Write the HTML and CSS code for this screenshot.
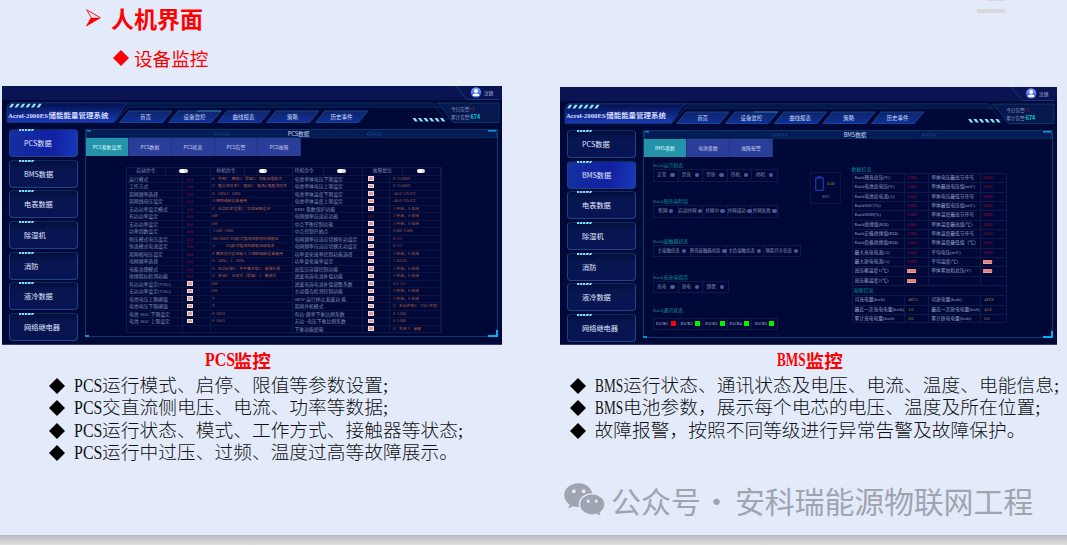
FILE: index.html
```html
<!DOCTYPE html>
<html lang="zh-CN">
<head>
<meta charset="utf-8">
<title>人机界面</title>
<link rel="stylesheet" href="styles.css">
</head>
<body>
<main class="slide">
  <header class="head">
    <div class="head-main">
      <h1><svg width="15" height="18" viewBox="0 0 15 18"><path d="M.7.8 14.3 8.7.7 16.8 5.3 8.7Z" fill="none" stroke="#f00" stroke-width=".9"/><path d="M5.3 8.7H14.3L.7 16.8Z" fill="#f00"/></svg><span>人机界面</span></h1>
      <h2><svg class="dia" viewBox="0 0 16 16"><path d="M8 0 16 8 8 16 0 8Z"/></svg><span>设备监控</span></h2>
    </div>
    <div class="deco"><i></i><i></i></div>
  </header>
  <div class="cols">
    <section class="col col-l">
      <div class="screen" id="pcs"></div>
      <h3><span class="lat"><b>PCS</b></span>监控</h3>
      <ul>
        <li><svg class="dia" viewBox="0 0 16 16"><path d="M8 0 16 8 8 16 0 8Z"/></svg><span class="lat"><b>PCS</b></span>运行模式、启停、限值等参数设置;</li>
        <li><svg class="dia" viewBox="0 0 16 16"><path d="M8 0 16 8 8 16 0 8Z"/></svg><span class="lat"><b>PCS</b></span>交直流侧电压、电流、功率等数据;</li>
        <li><svg class="dia" viewBox="0 0 16 16"><path d="M8 0 16 8 8 16 0 8Z"/></svg><span class="lat"><b>PCS</b></span>运行状态、模式、工作方式、接触器等状态;</li>
        <li><svg class="dia" viewBox="0 0 16 16"><path d="M8 0 16 8 8 16 0 8Z"/></svg><span class="lat"><b>PCS</b></span>运行中过压、过频、温度过高等故障展示。</li>
      </ul>
    </section>
    <section class="col col-r">
      <div class="screen" id="bms"></div>
      <h3><span class="lat lat-b"><b>BMS</b></span>监控</h3>
      <ul>
        <li><svg class="dia" viewBox="0 0 16 16"><path d="M8 0 16 8 8 16 0 8Z"/></svg><span class="lat lat-b"><b>BMS</b></span>运行状态、通讯状态及电压、电流、温度、电能信息;</li>
        <li><svg class="dia" viewBox="0 0 16 16"><path d="M8 0 16 8 8 16 0 8Z"/></svg><span class="lat lat-b"><b>BMS</b></span>电池参数，展示每个电芯的电压、温度及所在位置;</li>
        <li><svg class="dia" viewBox="0 0 16 16"><path d="M8 0 16 8 8 16 0 8Z"/></svg>故障报警，按照不同等级进行异常告警及故障保护。</li>
      </ul>
      <div class="mark">
        <svg width="41" height="34" viewBox="0 0 41 34"><path fill="#a0a4b1" fill-rule="evenodd" d="M14.5.3C6.500.3.2 5.600.2 12.300c0 3.800 2 7 5.300 9.200L4.300 25.500l4.600-2.300c2 .6 4 .9 6.200.8a10.500 10.500 0 0 1-.4-2.800c0-6.200 5.900-10.900 13.500-10.900C27 4.300 21.400.3 14.500.3ZM9.800 6.300a2 2 0 1 1 0 4 2 2 0 0 1 0-4Zm9.800 0a2 2 0 1 1 0 4 2 2 0 0 1 0-4Z"/><path fill="#a0a4b1" fill-rule="evenodd" d="M28.200 11.600c-6.800 0-12 4.400-12 9.800 0 5.500 5.200 9.900 12 9.900 1.600 0 3-.3 4.500-.7l3.900 2.200-1.100-3.500c2.900-1.900 4.800-4.700 4.800-7.900 0-5.400-5.400-9.800-12.100-9.800Zm-4 5a1.600 1.600 0 1 1 0 3.200 1.600 1.600 0 0 1 0-3.200Zm8 0a1.600 1.600 0 1 1 0 3.200 1.600 1.600 0 0 1 0-3.200Z"/></svg>
        <span class="mk1">公众号</span><span class="mkd">·</span><span class="mk2">安科瑞能源物联网工程</span>
      </div>
    </section>
  </div>
</main>
<script src="app.js"></script>
</body>
</html>
```

FILE: styles.css
```css
* { box-sizing: border-box; }
body {
  margin: 0; width: 1067px; height: 545px; overflow: hidden;
  background: linear-gradient(#b9babd 535px, #dedede 545px);
  font-family: "Liberation Serif", "Noto Sans CJK SC", serif;
}
.slide { height: 535px; background: #e3ebfb; overflow: hidden; }
h1, h2, h3, ul { margin: 0; padding: 0; font-weight: normal; }
.head { height: 86px; display: flex; justify-content: space-between; padding: 0 62px 0 86px; }
h1 { display: flex; align-items: center; gap: 10px; height: 36px; color: #f00; font: bold 23px/36px "Noto Sans CJK SC", sans-serif; }
h2 { display: flex; align-items: center; gap: 5px; margin: 8px 0 0 27px; height: 28px; color: #f00; font: 18.6px/28px "Noto Sans CJK SC", sans-serif; }
.dia { width: 16px; height: 16px; flex: none; fill: currentColor; }
.deco { display: flex; flex-direction: column; align-items: flex-end; gap: 8px; }
.deco i { width: 28px; height: 4px; background: #d9d9d9; }
.deco i:first-child { width: 18px; height: 1px; }
.cols { display: flex; gap: 58px; padding-left: 2px; }
.col { width: 500px; flex: none; }
.col-r { width: 507px; padding-top: 1px; }
.screen { width: 500px; height: 258.500px; background: #000838; overflow: hidden; border-bottom: 1px solid #30386c; font-family: "Noto Sans CJK SC", sans-serif; color: #c9d2f1; white-space: nowrap; }
.col-r .screen { width: 497px; height: 257.500px; }
h3 { height: 29px; padding-left: 203px; display: flex; color: #f00; font: bold 18.700px/30px "Noto Sans CJK SC", sans-serif; }
.col-r h3 { padding-left: 217px; }
.lat { width: 28.500px; flex: none; overflow: visible; font-family: "Liberation Serif", serif; }
.lat b { display: inline-block; font-weight: inherit; transform: scaleX(.85); transform-origin: 0 50%; }
.lat-b b { transform: scaleX(.71); }
ul { list-style: none; padding-left: 47px; padding-top: 1px; }
.col-r ul { padding-left: 10px; }
li { display: flex; align-items: center; height: 22.500px; color: #111; font: 300 18.700px/22.500px "Liberation Serif", "Noto Sans CJK SC", serif; white-space: nowrap; letter-spacing: .05px; }
li .dia { margin-right: 8.500px; fill: #000; }
.mark { display: flex; align-items: center; height: 36px; margin: 40px 0 0 4px; color: #a0a4b1; font: 30px/36px "Noto Sans CJK SC", sans-serif; }
.mk1 { margin-left: 6px; width: 92px; }
.mkd { width: 31px; text-align: center; margin-left: -2px; }
.mk2 { margin-left: 3px; letter-spacing: -.2px; }

/* console chrome */
.top { display: block; width: 100%; height: 43px; }
.top text { font-family: "Noto Sans CJK SC", sans-serif; }
.top .brand { font-family: "Liberation Serif", "Noto Sans CJK SC", serif; font-weight: bold; }
.body { display: flex; gap: 7px; padding: 0 4px 0 6px; }
.side { width: 70px; flex: none; display: flex; flex-direction: column; gap: 2.700px; }
.side div { height: 28px; width: 69px; margin-left: .5px; background: linear-gradient(#020e3d, #071650 30%, #081453); border: 1px solid #15488a; border-top-color: #0d2b63; border-bottom-width: 1.500px; border-radius: 4px; padding-left: 14.500px; font-size: 7.200px; line-height: 27px; position: relative; color: #e0e7ff; }
.side .on { background: linear-gradient(100deg, #1530a0, #1120a0 60%, #1838ba); }
.side div::before { content: ""; position: absolute; left: 9px; top: -1px; width: 15px; height: 2px; background: repeating-linear-gradient(115deg, #7fd8fa 0 2px, #1c5f95 2px 2.900px); }
.panel { flex: 1; height: 208px; border: 1px solid #073b70; border-top: 0; position: relative; }
.panel::before, .panel::after { content: ""; position: absolute; width: 8px; height: 5px; }
.panel::before { left: -1px; bottom: -1px; width: 4px; height: 2px; background: #0793dc; }
.panel::after { right: -1px; bottom: -1px; border-right: 2px solid #00b2f4; border-bottom: 2px solid #00b2f4; }
.ptitle { height: 9px; display: flex; align-items: center; justify-content: space-between; padding: 0 112px 0 126px; background: linear-gradient(90deg, #0a86c8 4px, transparent 4px) 0 0 / 100% 1.500px no-repeat, linear-gradient(270deg, #0a9be0 8px, transparent 8px) 0 0 / 100% 1.500px no-repeat, #041c55; border: 1px solid #07366d; border-bottom-color: #06295c; font-size: 5.600px; line-height: 8px; }
.ptitle svg { width: 18px; height: 4px; fill: none; stroke: #17598f; stroke-width: .7; }
.tabs { display: flex; height: 18px; }
.tabs span { width: 43px; background: #2a3d98; border-right: 1px solid #223287; text-align: center; font-size: 4.900px; line-height: 18px; }
.tabs .on { background: #2492a8; color: #d8ffff; }

/* parameter table */
.ptable { margin: 11px 0 0 40px; width: 315.500px; border: 1px solid #11184a; font: 4.850px/7px "Liberation Serif", "Noto Sans CJK SC", serif; color: #8590b5; }
.prow { display: grid; grid-template-columns: 55.500px 28.500px 81.500px 70.500px 26.500px 1fr; height: 7.500px; border-top: 1px solid #0c1444; }
.prow span { border-right: 1px solid #0f1646; padding-left: 2px; overflow: hidden; height: 7.500px; line-height: 7px; }
.prow .d { color: #b3644e; font-size: 3.900px; padding-left: 1px; }
.prow .d2 { padding-left: 3.500px; }
.prow .v { color: #a20d32; padding: 0 0 0 4.500px; font-size: 4.600px; }
.prow .v b { display: block; width: 6px; height: 4.500px; margin: .8px 0 0; background: #dc9a98; border: .5px solid #eedcdc; }
.phead { display: grid; grid-template-columns: 39px 45px 34px 47.500px 31.500px 39px 39.500px 1fr; height: 6.500px; line-height: 6px; }
.phead span { text-align: center; border-right: 1px solid #11184a; height: 6.500px; }
.phead span:nth-child(2) { padding-right: 9px; }
.phead span:nth-child(3) { padding-right: 3px; }
.phead span:nth-child(4) { padding-right: 11px; }
.phead span:nth-child(5) { padding-right: 7px; }
.phead span:nth-child(6) { padding-right: 3px; }
.phead b { display: block; width: 8.500px; height: 4px; margin: 1px auto 0; border-radius: 2px; background: linear-gradient(90deg, #fff 60%, #ddd 60%); }

/* battery screen */
.bms { display: flex; height: 181px; font: 4.900px/6px "Liberation Serif", "Noto Sans CJK SC", serif; color: #8590b5; }
.groups { width: 166px; padding: 6px 0 0 9px; }
.gt { color: #078f9f; line-height: 6px; height: 6px; font-size: 5px; }
.cells { display: flex; height: 12.500px; margin: 0 0 17.500px; width: max-content; border: 1px solid #11184a; }
.cells span { width: 24.600px; display: flex; align-items: center; justify-content: center; gap: 4px; border-right: 1px solid #11184a; font-size: 4.600px; }
.cells span:last-child { border: 0; }
.cells i { width: 4.300px; height: 4.300px; border-radius: 50%; background: #515a99; flex: none; }
.cells.wide { margin-bottom: 21px; }
.cells.wide span { gap: 1.500px; }
.cells.contact span { width: 36.500px; gap: 2px; font-size: 4.400px; }
.cells.rest { margin-bottom: 14.500px; }
.cells.pack { margin-top: 4px; margin-bottom: 0; }
.cells.pack span { font-size: 3.900px; gap: 2.500px; color: #c3cae6; }
.cells.pack i { border-radius: 0; background: #00f300; width: 5px; height: 5px; }
.cells.pack .bad { background: #f00; }
.soc { width: 30.500px; height: 32px; margin-top: 15px; border: 1px solid #0c1444; padding: 3px 4px; }
.soc div { display: flex; align-items: center; gap: 3px; color: #ad8a2a; font-size: 4.300px; }
.soc p { margin: 3px 0 0 7px; font-size: 4px; line-height: 5px; }
.info { margin: 10px 0 0 11px; width: 155px; }
.irow { display: grid; grid-template-columns: 52.700px 24px 52px 1fr; height: 9.330px; border: 1px solid #11184a; border-bottom: 0; }
.irow span { border-right: 1px solid #11184a; padding-left: 2px; line-height: 8.500px; font-size: 4.750px; color: #9da6c8; overflow: hidden; }
.irow span:last-child { border-right: 0; }
.irow .v { color: #a20d32; font-size: 4.100px; }
.irow .y { color: #b99139; font-size: 4.100px; padding-left: 3px; }
.irow em { font-style: normal; display: inline-block; line-height: 4px; background: #e6a09e; color: #d44; padding: 0; }
.sub { height: 10.500px; border: 1px solid #11184a; border-bottom: 0; line-height: 9.500px; padding-left: 1px; }
.last { border-bottom: 1px solid #11184a; }
```

FILE: app.js
```js
const NAV = ['首页', '设备监控', '曲线报表', '策略', '历史事件'];
const SIDE = ['PCS数据', 'BMS数据', '电表数据', '除湿机', '消防', '液冷数据', '网络继电器'];

function slashes(x, y, n, step, lean) {
  let s = '';
  for (let i = 0; i < n; i++) {
    const a = x + i * step;
    s += `<path d="M${a + (lean > 0 ? 2 : 0)} ${y}h2.800l${-lean} 3.600h-2.800z" fill="#8be6f6"/>`;
  }
  return s;
}

function topBar(id) {
  const tabs = NAV.map((t, i) => {
    const x = 118 + i * 49;
    return `<path d="M${x + 9} 25h43l-9.500 11.500h-43z" fill="url(#t${id})" stroke="#194f98" stroke-width=".8"/>` +
      (i === 1 ? `<path d="M${x + 28} 25h24" stroke="#2a93b8" stroke-width=".8"/>` : '') +
      `<text x="${x + 25.5}" y="33" font-size="5.500" text-anchor="middle" fill="#ccd7f7">${t}</text>`;
  }).join('');
  return `<svg class="top" viewBox="0 0 500 43" preserveAspectRatio="none">
  <defs>
    <linearGradient id="t${id}" x2="0" y2="1"><stop stop-color="#0d2568"/><stop offset="1" stop-color="#10309a"/></linearGradient>
    <linearGradient id="b${id}" x2="0" y2="1"><stop stop-color="#03104c"/><stop offset="1" stop-color="#1a3bb7"/></linearGradient>
    <linearGradient id="a${id}" x2="0" y2="1"><stop stop-color="#7fa6ff"/><stop offset="1" stop-color="#274fd1"/></linearGradient>
  </defs>
  <path d="M0 0H500V14H0Z" fill="#0b1453"/>
  <path d="M454 0 465 13.500H497" fill="none" stroke="#15447f" stroke-width=".8"/>
  <circle cx="474" cy="6.500" r="5.200" fill="url(#a${id})"/><circle cx="474" cy="5" r="1.900" fill="#fff"/><path d="M470.500 9.500q0-2 3.500-2t3.500 2l-1 .8h-5z" fill="#fff"/>
  <text x="482" y="8.600" font-size="4.600" fill="#bdc6e7">注销</text>
  <path d="M5 20 9 16.500H430L443 33H456" fill="none" stroke="#082458"/>
  <path d="M122 17H436V19.500H124Z" fill="#051b50"/>
  <path d="M5 20 9 17H125L112 36.500H5Z" fill="url(#b${id})" stroke="#123782" stroke-width=".7"/>
  <path d="M112 36.500 126 21H438" fill="none" stroke="#0b346b" stroke-width="1"/>
  <path d="M436 17H497V36.500H451Z" fill="#06194e" stroke="#0d3c75" stroke-width=".8"/>
  ${slashes(7.5, 17.800, 6, 5.500, 2.500)}${slashes(410.5, 32, 6, 5.500, -2.500)}
  <text class="brand" x="6" y="31.500" font-size="6.700" textLength="40" lengthAdjust="spacingAndGlyphs" fill="#d5dcff">Acrel-2000ES</text>
  <text class="brand" x="46.500" y="31.500" font-size="6.700" textLength="60" lengthAdjust="spacingAndGlyphs" fill="#d5dcff">储能能量管理系统</text>
  ${tabs}
  <text x="449" y="25" font-size="4.600" fill="#8e9aca">今日告警: <tspan fill="#d50b2c">1</tspan></text>
  <text x="449" y="33.200" font-size="4.600" fill="#8e9aca">累计告警: <tspan x="468.500" font-size="5.500" font-weight="bold" fill="#08c5d3">674</tspan></text>
  </svg>`;
}

const chevrons = dir => {
  let d = '';
  for (let i = 0; i < 6; i++) {
    const x = 1 + i * 2.6;
    d += dir > 0 ? `M${x} .3 ${x + 1.8} 2 ${x} 3.700` : `M${x + 1.8} .3 ${x} 2 ${x + 1.8} 3.700`;
  }
  return `<svg viewBox="0 0 18 4"><path d="${d}"/></svg>`;
};

function shell(id, active, title, tabs, content) {
  document.getElementById(id).innerHTML = topBar(id) +
    `<div class="body"><nav class="side">${SIDE.map((s, i) => `<div class="${i === active ? 'on' : ''}">${s}</div>`).join('')}</nav>
    <div class="panel"><div class="ptitle">${chevrons(1)}<span>${title}</span>${chevrons(-1)}</div>
    <div class="tabs">${tabs.map((t, i) => `<span class="${i ? '' : 'on'}">${t}</span>`).join('')}</div>${content}</div></div>`;
}

const L = [
  ['运行模式', '0：并网1：离网2：预留3：电能治理模式'],
  ['工作方式', '0：恒交流功率1：恒压2：恒流4 恒直流功率'],
  ['离网频率选择', '0：50Hz1：60Hz'],
  ['离网线电压设定', '三相四线制设备使用'],
  ['无功功率设定模式', '0：无功功率设置1：功率因数设定'],
  ['有功功率设定', 'kW'], ['无功功率设定', 'kW'],
  ['功率因数设定', '-1.000~1.000'],
  ['恒压模式电压设定', '580-1000V PQ模式恒流充放电母线电压'],
  ['恒流模式电流设定', 'A　　　PQ模式恒流充放电母线电流'],
  ['离网相电压设定', 'V 离网运行设定输入 三相四线制设备使用'],
  ['电网频率选择', '0：50Hz，1：60Hz'],
  ['电能治理模式', '0：无功补偿1：不平衡补偿2：谐波补偿'],
  ['绝缘阻抗检测功能', '0：关闭1：主动式（预留）2：被动式'],
  ['有功功率设定(VSG)', 'kW'], ['无功功率设定(VSG)', 'kW'],
  ['电池电压上限阈值', 'V'], ['电池电压下限阈值', 'V'],
  ['电池 SOC 下限设定', '0~100.0'], ['电池 SOC 上限设定', '0~100.0'], ['', '']
];
const SW = '1-开启，0-关闭';
const R = [
  ['电池单体电压下限设定', '0~15.000V'], ['电池单体电压上限设定', '0~15.000V'],
  ['电池单体温度下限设定', '-40.0~125.0℃'], ['电池单体温度上限设定', '-40.0~125.0℃'],
  ['BMS 参数保护功能', SW], ['电网频率自适应功能', SW], ['中点平衡控制功能', SW],
  ['中点控制开始点', '0.000~2.000'], ['电网频率自适应切换有功设定', '0~1.1'],
  ['电网频率自适应切换无功设定', '0~1.1'], ['功率变化速率控制功能选择', SW],
  ['功率变化速率设定', '1~65535'], ['高低压穿越控制功能', SW], ['滤波电容电流补偿功能', SW],
  ['滤波电容电流补偿调整系数', '0.5~1.5'], ['主动孤岛检测控制功能', SW],
  ['0KW 运行停止发波功 能', SW], ['离网并机模式', '0：主从并机1：VSG 并机'],
  ['有功-频率下垂比例系数', '0~1.000'], ['无功- 电压下垂比例系数', '0~1.000'],
  ['下垂功能使能', '0：关闭 1：使能']
];
const box = '<b></b>';
const rows = L.map((l, i) => `<div class="prow"><span>${l[0]}</span><span class="v">${i < 14 ? '0.0' : l[0] ? box : ''}</span><span class="d">${l[1]}</span><span>${R[i][0]}</span><span class="v">${i === 5 ? '0.0' : box}</span><span class="d d2">${R[i][1]}</span></div>`).join('');
const head = ['启动命令', '停机命令', '待机命令', '故障复位'].map(t => `<span>${t}</span><span>${box}</span>`).join('');
shell('pcs', 0, 'PCS数据', ['PCS参数设置', 'PCS数据', 'PCS状态', 'PCS告警', 'PCS故障'],
  `<div class="ptable"><div class="phead">${head}</div>${rows}</div>`);

const group = (t, items, cls = '') => `<div class="gt">${t}</div><div class="cells ${cls}">${items.map((x, i) => `<span>${x}<i class="${cls === 'pack' && !i ? 'bad' : ''}"></i></span>`).join('')}</div>`;
const info = [
  ['Rack预充总压(V)', '单体电压最高节序号'], ['Rack电池总电压(V)', '单体最高电压值(mV)'],
  ['Rack电池总电流(A)', '单体电压最低节序号'], ['RackSOC(%)', '单体最低电压值(mV)'],
  ['RackSOH(%)', '单体温度最高节序号'], ['Rack绝缘值(KΩ)', '单体温度最高值(℃)'],
  ['Rack正极绝缘值(KΩ)', '单体温度最低节序号'], ['Rack负极绝缘值(KΩ)', '单体温度最低值（℃）'],
  ['最大充电电流(A)', '平均电压(mV)'], ['最大放电电流(A)', '平均温度(℃)'],
  ['高压箱温度1(℃)', '单体累加和总压(V)'], ['高压箱温度2(℃)', '']
];
const val = hot => hot ? '<em>0.000</em>' : '0.000';
const infoRows = info.map((r, i) => `<div class="irow"><span>${r[0]}</span><span class="v">${val(i > 9)}</span><span>${r[1]}</span><span class="v">${r[1] ? val(i > 8) : ''}</span></div>`).join('');
const energy = [['可充电量(kwh)', '407.5', '可放电量(kwh)', '419.8'], ['最近一次充电电量(kwh)', '1.6', '最近一次放电电量(kwh)', '41.8'], ['累计充电电量(kwh)', '0.0', '累计放电电量(kwh)', '0.0']]
  .map((r, i) => `<div class="irow ${i === 2 ? 'last' : ''}"><span>${r[0]}</span><span class="y">${r[1]}</span><span>${r[2]}</span><span class="y">${r[3]}</span></div>`).join('');
shell('bms', 1, 'BMS数据', ['BMS参数', '电池参数', '故障报警'],
  `<div class="bms"><div class="groups">
  ${group('Rack运行状态', ['正常', '禁充', '禁放', '待机', '停机'])}
  ${group('Rack预充电阶段', ['断网', '启动并网', '并网中', '并网成功', '并网失败'], 'wide')}
  ${group('Rack接触器状态', ['主接触状态', '预充接触器状态', '主负接触状态', '隔离开关状态'], 'contact')}
  ${group('Rack充放电指示', ['充电', '放电', '静置'], 'rest')}
  ${group('Rack通讯状态', ['PACK1', 'PACK2', 'PACK3', 'PACK4', 'PACK5'], 'pack')}
  </div>
  <div class="soc"><div><svg width="9" height="15" viewBox="0 0 9 15"><path d="M.8 2H8.200V14.300H.8ZM3 2V.8H6V2" fill="none" stroke="#2941d6"/></svg>0.00</div><p>SOC</p></div>
  <div class="info"><div class="gt">数据信息</div>${infoRows}<div class="gt sub">电能信息</div>${energy}</div></div>`);
```
